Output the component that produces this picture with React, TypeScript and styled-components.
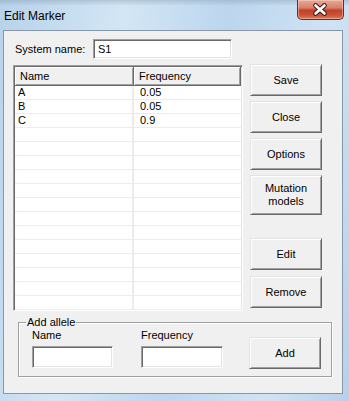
import React from 'react'
import styled, { createGlobalStyle } from 'styled-components'

const GlobalStyle = createGlobalStyle`
  html, body {
    margin: 0;
    padding: 0;
  }
  body {
    font-family: 'Liberation Sans', Arial, sans-serif;
    font-size: 11px;
    color: #000;
  }
`

const Window = styled.div`
  width: 349px;
  height: 401px;
  display: flex;
  flex-direction: column;
  overflow: hidden;
  background:
    linear-gradient(180deg, rgba(120, 140, 160, 0.35) 0px, rgba(255, 255, 255, 0) 6px),
    linear-gradient(100deg, #b7d2ea 0%, #d3e6f5 30%, #bcd6ee 55%, #cfe3f4 80%, #b6d1ea 100%);
`

const TitleBar = styled.div`
  height: 30px;
  flex: none;
  display: flex;
  align-items: flex-start;
  justify-content: space-between;
`

const Title = styled.span`
  font-family: 'Liberation Sans', Arial, sans-serif;
  font-size: 12px;
  line-height: 14px;
  margin: 9px 0 0 4px;
  color: #000;
`

const CloseButton = styled.div`
  width: 47px;
  height: 20px;
  margin-right: 5px;
  box-sizing: border-box;
  border: 1px solid #6b2c22;
  border-top: none;
  border-radius: 0 0 5px 5px;
  background: linear-gradient(180deg, #e9a899 0%, #d8816c 40%, #c2402a 55%, #cc5337 80%, #dd7a5c 100%);
  box-shadow: inset 0 0 0 1px rgba(255, 220, 210, 0.45);
  display: flex;

  & svg {
    display: block;
  }
`

const Client = styled.div`
  flex: 1;
  margin: 0 6px 7px 3px;
  border: 1px solid #8797a8;
  background: #f0f0f0;
  display: flex;
  flex-direction: column;
`

const TopRow = styled.div`
  display: flex;
  align-items: center;
  margin: 8px 0 0 11px;
`

const Label = styled.span<{ $width?: number }>`
  width: ${p => (p.$width ? `${p.$width}px` : 'auto')};
  line-height: 13px;
  white-space: nowrap;
`

const TextBox = styled.div<{ $width: number; $height: number }>`
  width: ${p => p.$width}px;
  height: ${p => p.$height}px;
  box-sizing: border-box;
  background: #fff;
  border: 1px solid;
  border-color: #a0a0a0 #ffffff #ffffff #a0a0a0;
  box-shadow: inset 1px 1px 0 #696969, inset -1px -1px 0 #e3e3e3;
  padding: 3px 4px;
  line-height: 13px;
`

const Main = styled.div`
  display: flex;
  margin: 5px 0 0 9px;
`

const List = styled.div`
  width: 230px;
  height: 246px;
  margin-top: 1px;
  box-sizing: border-box;
  background: #fff;
  border: 1px solid;
  border-color: #a0a0a0 #ffffff #ffffff #a0a0a0;
  box-shadow: inset 1px 1px 0 #696969, inset -1px -1px 0 #e3e3e3;
  padding: 1px;
  overflow: hidden;
`

const Grid = styled.div`
  display: grid;
  grid-template-columns: 119px 107px;
`

const HeaderCell = styled.div`
  height: 19px;
  box-sizing: border-box;
  background: #f0f0f0;
  border-right: 1px solid #696969;
  border-bottom: 1px solid #696969;
  box-shadow: inset 1px 1px 0 #ffffff, inset -1px -1px 0 #a0a0a0;
  padding: 3px 5px 0;
  line-height: 13px;
`

const Cell = styled.div<{ $first?: boolean }>`
  height: 14px;
  box-sizing: border-box;
  border-bottom: 1px solid #ececec;
  border-right: ${p => (p.$first ? '2px solid #ececec' : 'none')};
  padding: 0 ${p => (p.$first ? 3 : 6)}px;
  line-height: 13px;
`

const ButtonColumn = styled.div`
  display: flex;
  flex-direction: column;
  gap: 5px;
  margin-left: 7px;
`

const Button = styled.div<{ $tall?: boolean; $gapAbove?: number }>`
  width: 72px;
  height: ${p => (p.$tall ? 40 : 32)}px;
  margin-top: ${p => p.$gapAbove ?? 0}px;
  box-sizing: border-box;
  background: #f0f0f0;
  border: 1px solid;
  border-color: #e3e3e3 #696969 #696969 #e3e3e3;
  box-shadow: inset 1px 1px 0 #ffffff, inset -1px -1px 0 #a0a0a0;
  display: flex;
  align-items: center;
  justify-content: center;
  text-align: center;
  line-height: 13px;
`

const GroupBox = styled.fieldset`
  margin: 5px 10px 0 14px;
  padding: 0 0 8px 13px;
  border: 1px solid #a0a0a0;
  box-shadow: inset 1px 1px 0 #ffffff, 1px 1px 0 #ffffff;
  min-width: 0;
  display: flex;
  align-items: flex-end;
`

const Legend = styled.legend`
  margin-left: -6px;
  padding: 0 1px;
  line-height: 13px;
`

const Field = styled.div<{ $gapRight: number }>`
  display: flex;
  flex-direction: column;
  gap: 4px;
  margin-right: ${p => p.$gapRight}px;
`

const AddButton = styled(Button)`
  margin-bottom: -1px;
`

const CloseGlyph = () => (
  <svg width="45" height="19" viewBox="0 0 45 19">
    <g strokeLinecap="round">
      <path d="M17.5 5.5 L26.5 13.5 M26.5 5.5 L17.5 13.5" stroke="#3b1610" strokeWidth="4.6" />
      <path d="M17.5 5.5 L26.5 13.5 M26.5 5.5 L17.5 13.5" stroke="#ffffff" strokeWidth="2.6" />
    </g>
  </svg>
)

const alleles = [
  { name: 'A', freq: '0.05' },
  { name: 'B', freq: '0.05' },
  { name: 'C', freq: '0.9' },
]

const TOTAL_ROWS = 16

const App = () => {
  const rows = Array.from({ length: TOTAL_ROWS }, (_, i) => alleles[i] ?? { name: '', freq: '' })

  return (
    <>
      <GlobalStyle />
      <Window>
        <TitleBar>
          <Title>Edit Marker</Title>
          <CloseButton>
            <CloseGlyph />
          </CloseButton>
        </TitleBar>
        <Client>
          <TopRow>
            <Label $width={78}>System name:</Label>
            <TextBox $width={139} $height={20}>S1</TextBox>
          </TopRow>
          <Main>
            <List>
              <Grid>
                <HeaderCell>Name</HeaderCell>
                <HeaderCell>Frequency</HeaderCell>
                {rows.map((r, i) => (
                  <React.Fragment key={i}>
                    <Cell $first>{r.name}</Cell>
                    <Cell>{r.freq}</Cell>
                  </React.Fragment>
                ))}
              </Grid>
            </List>
            <ButtonColumn>
              <Button>Save</Button>
              <Button>Close</Button>
              <Button>Options</Button>
              <Button $tall>Mutation<br />models</Button>
              <Button $gapAbove={18}>Edit</Button>
              <Button $gapAbove={1}>Remove</Button>
            </ButtonColumn>
          </Main>
          <GroupBox>
            <Legend>Add allele</Legend>
            <Field $gapRight={28}>
              <Label>Name</Label>
              <TextBox $width={81} $height={22} />
            </Field>
            <Field $gapRight={26}>
              <Label>Frequency</Label>
              <TextBox $width={82} $height={22} />
            </Field>
            <AddButton>Add</AddButton>
          </GroupBox>
        </Client>
      </Window>
    </>
  )
}

export default App
